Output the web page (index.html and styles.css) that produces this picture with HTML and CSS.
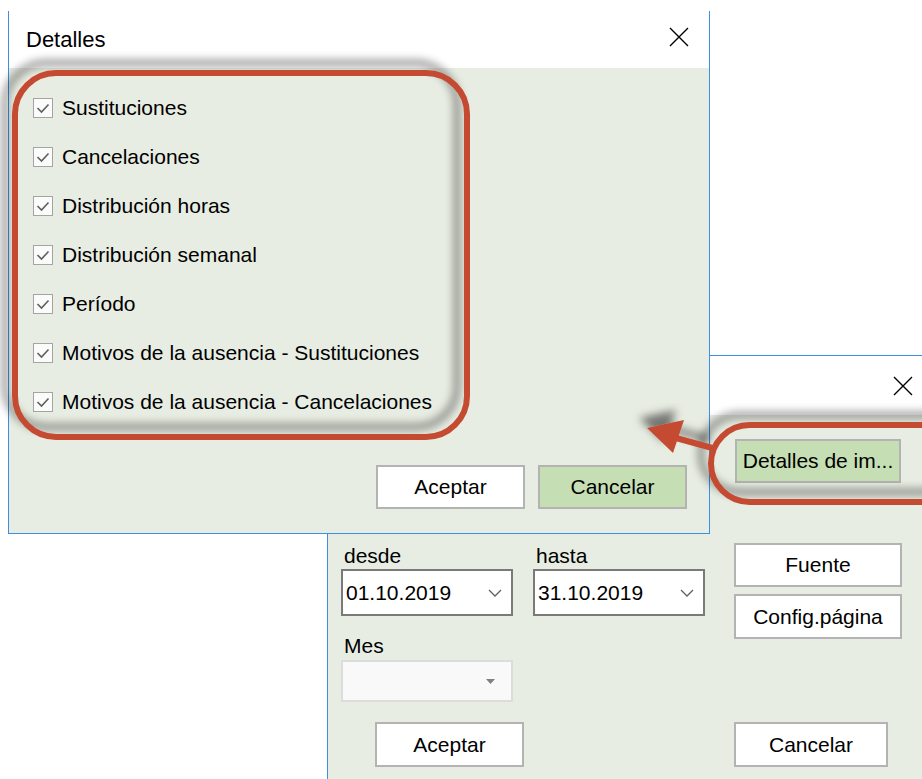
FILE: index.html
```html
<!DOCTYPE html>
<html lang="es">
<head>
<meta charset="utf-8">
<title>Detalles</title>
<link rel="stylesheet" href="styles.css">
</head>
<body>
  <section class="win win-back">
    <header class="titlebar titlebar-back">
      <span class="title"></span>
      <svg class="close" viewBox="0 0 20 20"><path d="M1 1L19 19M19 1L1 19" stroke="#000" stroke-width="1.4" fill="none"/></svg>
    </header>
    <div class="pane2">
      <div class="col-left">
        <div class="dates">
          <div class="field">
            <label class="flabel">desde</label>
            <div class="combo"><span>01.10.2019</span><svg class="chev" viewBox="0 0 14 8"><path d="M1 1L7 7L13 1" fill="none" stroke="#606060" stroke-width="1.3"/></svg></div>
          </div>
          <div class="field">
            <label class="flabel">hasta</label>
            <div class="combo"><span>31.10.2019</span><svg class="chev" viewBox="0 0 14 8"><path d="M1 1L7 7L13 1" fill="none" stroke="#606060" stroke-width="1.3"/></svg></div>
          </div>
        </div>
        <div class="field mes">
          <label class="flabel">Mes</label>
          <div class="combo combo-off"><span></span><svg class="tri" viewBox="0 0 9 5"><path d="M0 0H9L4.5 5Z" fill="#808080"/></svg></div>
        </div>
        <button class="btn btn-ok2">Aceptar</button>
      </div>
      <div class="col-right">
        <div class="hl">
          <button class="btn green btn-det">Detalles de im...</button>
        </div>
        <button class="btn btn-side btn-fuente">Fuente</button>
        <button class="btn btn-side btn-config">Config.página</button>
        <button class="btn btn-cancel2">Cancelar</button>
      </div>
    </div>
  </section>

  <section class="win win-front">
    <header class="titlebar titlebar-front">
      <span class="title">Detalles</span>
      <svg class="close close-front" viewBox="0 0 20 20"><path d="M1 1L19 19M19 1L1 19" stroke="#000" stroke-width="1.4" fill="none"/></svg>
    </header>
    <div class="pane">
      <div class="checklist">
        <label class="check"><svg class="box" viewBox="0 0 20 20"><rect x="0.5" y="0.5" width="19" height="19" fill="#fbfbfb" stroke="#a4a4a4"/><path d="M4.5 10L8.5 14L15.5 6.5" fill="none" stroke="#5f5f5f" stroke-width="1.6"/></svg>Sustituciones</label>
        <label class="check"><svg class="box" viewBox="0 0 20 20"><rect x="0.5" y="0.5" width="19" height="19" fill="#fbfbfb" stroke="#a4a4a4"/><path d="M4.5 10L8.5 14L15.5 6.5" fill="none" stroke="#5f5f5f" stroke-width="1.6"/></svg>Cancelaciones</label>
        <label class="check"><svg class="box" viewBox="0 0 20 20"><rect x="0.5" y="0.5" width="19" height="19" fill="#fbfbfb" stroke="#a4a4a4"/><path d="M4.5 10L8.5 14L15.5 6.5" fill="none" stroke="#5f5f5f" stroke-width="1.6"/></svg>Distribución horas</label>
        <label class="check"><svg class="box" viewBox="0 0 20 20"><rect x="0.5" y="0.5" width="19" height="19" fill="#fbfbfb" stroke="#a4a4a4"/><path d="M4.5 10L8.5 14L15.5 6.5" fill="none" stroke="#5f5f5f" stroke-width="1.6"/></svg>Distribución semanal</label>
        <label class="check"><svg class="box" viewBox="0 0 20 20"><rect x="0.5" y="0.5" width="19" height="19" fill="#fbfbfb" stroke="#a4a4a4"/><path d="M4.5 10L8.5 14L15.5 6.5" fill="none" stroke="#5f5f5f" stroke-width="1.6"/></svg>Período</label>
        <label class="check"><svg class="box" viewBox="0 0 20 20"><rect x="0.5" y="0.5" width="19" height="19" fill="#fbfbfb" stroke="#a4a4a4"/><path d="M4.5 10L8.5 14L15.5 6.5" fill="none" stroke="#5f5f5f" stroke-width="1.6"/></svg>Motivos de la ausencia - Sustituciones</label>
        <label class="check"><svg class="box" viewBox="0 0 20 20"><rect x="0.5" y="0.5" width="19" height="19" fill="#fbfbfb" stroke="#a4a4a4"/><path d="M4.5 10L8.5 14L15.5 6.5" fill="none" stroke="#5f5f5f" stroke-width="1.6"/></svg>Motivos de la ausencia - Cancelaciones</label>
      </div>
      <div class="actions">
        <button class="btn btn-dlg">Aceptar</button>
        <button class="btn green btn-dlg">Cancelar</button>
      </div>
    </div>
  </section>

  <svg class="arrow" width="922" height="779" viewBox="0 0 922 779">
    <defs>
      <filter id="sh" x="-50%" y="-50%" width="200%" height="200%">
        <feDropShadow dx="-8" dy="-10" stdDeviation="4" flood-color="#000" flood-opacity="0.5"/>
      </filter>
    </defs>
    <g filter="url(#sh)">
      <path d="M676 438L716 449" stroke="#c44b32" stroke-width="6" fill="none"/>
      <path d="M647 428L684 420L673 453Z" fill="#c44b32"/>
    </g>
  </svg>
</body>
</html>
```

FILE: styles.css
```css
html, body {
  margin: 0;
  padding: 0;
  overflow: hidden;
  background: #ffffff;
}

body {
  position: relative;
  width: 922px;
  height: 779px;
  font-family: "Liberation Sans", Arial, sans-serif;
  font-size: 21px;
  line-height: 24px;
  color: #000;
}

.win {
  position: absolute;
  box-sizing: border-box;
  border: 1px solid #3d8fe3;
  background: #e8ede3;
  display: flex;
  flex-direction: column;
}

.win-back {
  left: 327px;
  top: 355px;
  width: 595px;
  height: 424px;
  border-right: none;
  border-bottom: none;
  overflow: hidden;
}

.win-front {
  left: 8px;
  top: 11px;
  width: 702px;
  height: 523px;
  border-top: none;
}

.titlebar {
  background: #ffffff;
  display: flex;
  align-items: center;
  justify-content: space-between;
  flex: none;
}

.titlebar-front {
  height: 57px;
  padding: 0 20px 0 17px;
}

.titlebar-back {
  height: 59px;
  padding: 0 9px 0 17px;
}

.title {
  font-size: 22px;
  line-height: 26px;
}

.close {
  width: 20px;
  height: 20px;
  display: block;
}

.close-front {
  margin-bottom: 5px;
}

/* Detalles dialog */
.pane {
  flex: 1;
  display: flex;
  flex-direction: column;
  padding: 15px 22px 0 24px;
}

.checklist {
  position: relative;
  display: flex;
  flex-direction: column;
  width: 437px;
}

.checklist::before {
  content: "";
  position: absolute;
  left: -21px;
  top: -13px;
  width: 458px;
  height: 370px;
  box-sizing: border-box;
  border: 6px solid #c44b32;
  border-radius: 44px;
  filter: drop-shadow(-10px -10px 4px rgba(0, 0, 0, 0.45));
  z-index: 2;
  pointer-events: none;
}

.check {
  height: 49px;
  display: flex;
  align-items: center;
  gap: 9px;
  white-space: nowrap;
}

.box {
  width: 20px;
  height: 20px;
  display: block;
  flex: none;
}

.actions {
  margin-top: 39px;
  display: flex;
  justify-content: flex-end;
  gap: 13px;
}

/* buttons */
.btn {
  font: inherit;
  font-size: 21px;
  color: #000;
  box-sizing: border-box;
  border: 2px solid #b3b3b3;
  background: #ffffff;
  padding: 0;
  margin: 0;
  display: flex;
  align-items: center;
  justify-content: center;
  white-space: nowrap;
}

.btn.green {
  background: #c6deb3;
}

.btn-dlg {
  width: 149px;
  height: 44px;
}

/* back dialog */
.pane2 {
  flex: 1;
  display: flex;
  gap: 30px;
  padding-left: 13px;
}

.col-left {
  width: 363px;
  display: flex;
  flex-direction: column;
  padding-top: 129px;
}

.dates {
  display: flex;
  gap: 20px;
}

.field {
  display: flex;
  flex-direction: column;
}

.flabel {
  padding-left: 3px;
  line-height: 24px;
}

.combo {
  margin-top: 1px;
  width: 172px;
  height: 47px;
  box-sizing: border-box;
  border: 2px solid #7a7a7a;
  background: #ffffff;
  display: flex;
  align-items: center;
  justify-content: space-between;
  padding: 0 9px 0 3px;
}

.chev {
  width: 14px;
  height: 8px;
  display: block;
}

.mes {
  margin-top: 18px;
}

.combo-off {
  margin-top: 2px;
  height: 42px;
  border-color: #dcdcdc;
  background: #f9f9f9;
  padding-right: 16px;
}

.tri {
  width: 9px;
  height: 5px;
  display: block;
}

.btn-ok2 {
  margin-top: 20px;
  margin-left: 34px;
  width: 149px;
  height: 45px;
}

.col-right {
  width: 168px;
  display: flex;
  flex-direction: column;
  padding-top: 24px;
}

.hl {
  position: relative;
  margin-left: 1px;
  width: 166px;
}

.hl::before {
  content: "";
  position: absolute;
  left: -27px;
  top: -17px;
  width: 267px;
  height: 83px;
  box-sizing: border-box;
  border: 6px solid #c44b32;
  border-radius: 42px;
  filter: drop-shadow(-10px -10px 4px rgba(0, 0, 0, 0.45));
  z-index: 2;
  pointer-events: none;
}

.btn-det {
  width: 166px;
  height: 44px;
}

.btn-side {
  width: 168px;
}

.btn-fuente {
  margin-top: 60px;
  height: 44px;
}

.btn-config {
  margin-top: 7px;
  height: 45px;
}

.btn-cancel2 {
  margin-top: 83px;
  width: 154px;
  height: 45px;
}

.arrow {
  position: absolute;
  left: 0;
  top: 0;
  z-index: 3;
  pointer-events: none;
}
```
